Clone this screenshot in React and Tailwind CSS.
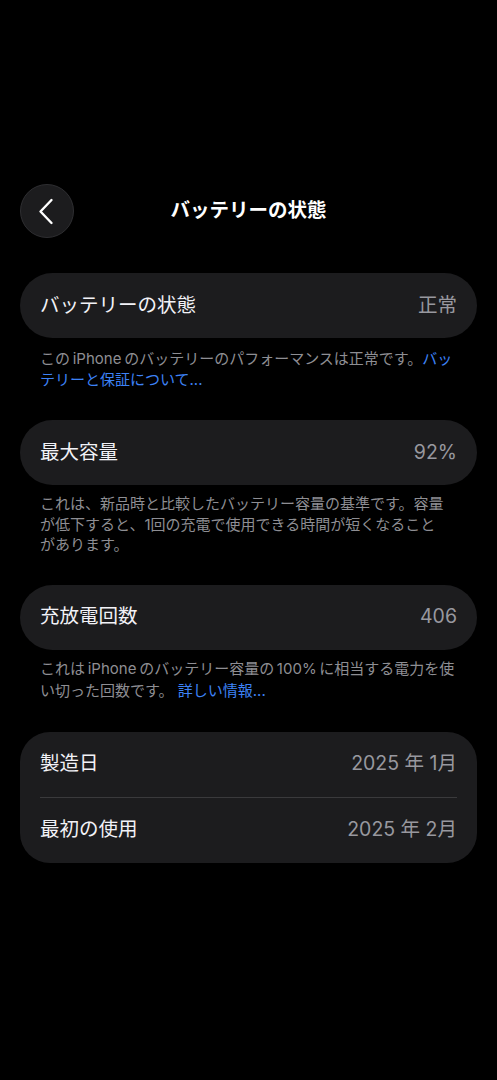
import React from 'react';

const font = { fontFamily: 'Inter, "Noto Sans CJK JP", sans-serif' };

const note1 = 'この\u2009iPhone\u2009のバッテリーのパフォーマンスは正常です。';
const note3 = 'これは\u2009iPhone\u2009のバッテリー容量の\u2009100%\u2009に相当する電力を使い切った回数です。 ';

const Row = ({ label, value }) => (
  <div className="flex h-[65px] items-center justify-between px-5">
    <span className="text-[19.5px] text-[#f2f2f7]">{label}</span>
    <span className="text-[19.5px] text-[#98989f]">{value}</span>
  </div>
);

const Note = ({ children, className }) => (
  <p className={`px-5 text-[15px] text-[#8e8e93] ${className}`}>{children}</p>
);

const App = () => {
  return (
    <div style={font} className="min-h-[1080px] w-full bg-black px-5 pt-[184px]">
      <div className="relative flex h-[54px] items-center justify-center">
        <button className="absolute left-0 top-0 flex h-[54px] w-[54px] items-center justify-center rounded-full border border-[#2e2e31] bg-[#1c1c1e]">
          <svg width="16" height="27" viewBox="0 0 16 27" fill="none" className="mr-[3px]">
            <path d="M13.5 2 L2.5 13.5 L13.5 25" stroke="#fff" strokeWidth="2.4" strokeLinecap="round" strokeLinejoin="round" />
          </svg>
        </button>
        <h1 className="text-[19.5px] font-bold text-white">バッテリーの状態</h1>
      </div>

      <div className="mt-[35px] rounded-full bg-[#1c1c1e]">
        <Row label="バッテリーの状態" value="正常" />
      </div>
      <Note className="mt-[10px] leading-[21px]">
        {note1}
        <span className="text-[#3d82f6]">バッテリーと保証について...</span>
      </Note>

      <div className="mt-[30px] rounded-full bg-[#1c1c1e]">
        <Row label="最大容量" value="92%" />
      </div>
      <Note className="mt-[9px] max-w-[450px] leading-[20.5px]">
        これは、新品時と比較したバッテリー容量の基準です。容量が低下すると、1回の充電で使用できる時間が短くなることがあります。
      </Note>

      <div className="mt-[29px] rounded-full bg-[#1c1c1e]">
        <Row label="充放電回数" value="406" />
      </div>
      <Note className="mt-[8px] leading-[22px]">
        {note3}
        <span className="text-[#3d82f6]">詳しい情報...</span>
      </Note>

      <div className="mt-[30px] rounded-[30px] bg-[#1c1c1e]">
        <Row label="製造日" value="2025 年 1月" />
        <div className="mx-5 h-px bg-[#3a3a3c]" />
        <Row label="最初の使用" value="2025 年 2月" />
      </div>
    </div>
  );
};

export default App;
